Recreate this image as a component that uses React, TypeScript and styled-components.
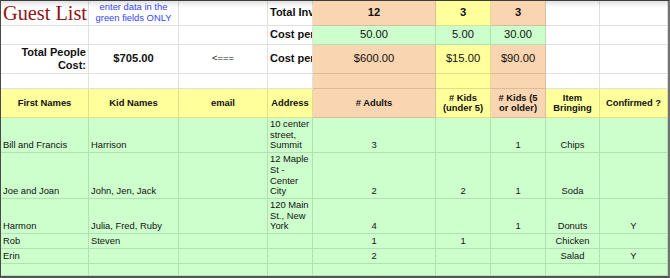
import React from 'react';
import styled, { createGlobalStyle } from 'styled-components';

const GlobalStyle = createGlobalStyle`
  html, body { margin: 0; padding: 0; background: #fff; }
  body { font-family: "Liberation Sans", Arial, sans-serif; }
`;

const GREEN = '#ccffcc';
const ORANGE = '#fad5b2';
const YELLOW = '#ffff9c';

const COLS = [88, 90, 89, 45, 123, 55, 55, 54, 68];
const ROWS = [25, 19, 29, 15, 29, 35, 46, 35, 15, 15, 12];

const Sheet = styled.div`
  box-sizing: border-box;
  width: 670px;
  height: 278px;
  display: grid;
  grid-template-columns: ${COLS.map((c) => `${c}px`).join(' ')};
  grid-template-rows: ${ROWS.map((r) => `${r}px`).join(' ')};
  border-top: 1px solid #3c3c3c;
  border-left: 1px solid #4a4a4a;
  border-right: 2px solid #727272;
  border-bottom: 2px solid #555;
  background: #fff;
  box-shadow: inset 0 7px 6px -5px rgba(0, 0, 0, 0.16);
  overflow: hidden;
  color: #111;
`;

type Align = 'left' | 'center' | 'right';
type VAlign = 'middle' | 'bottom';

const Cell = styled.div<{ $bg?: string; $align?: Align; $v?: VAlign }>`
  box-sizing: border-box;
  min-width: 0;
  display: flex;
  flex-direction: column;
  justify-content: ${(p) => (p.$v === 'middle' ? 'center' : 'flex-end')};
  text-align: ${(p) => p.$align ?? 'left'};
  padding: 0 2px 1px 2px;
  background: ${(p) => p.$bg ?? 'transparent'};
  border-right: 1px solid rgba(0, 0, 0, 0.12);
  border-bottom: 1px solid rgba(0, 0, 0, 0.12);
  font-size: 9.4px;
  line-height: 10.7px;
  overflow: hidden;
`;

const Title = styled.span`
  font-family: "Liberation Serif", "Times New Roman", serif;
  font-size: 20.3px;
  line-height: 22px;
  color: #8e1515;
  white-space: nowrap;
`;

const Note = styled.span`
  color: #3246ff;
  font-size: 9.4px;
  line-height: 10.7px;
`;

const Label = styled.span`
  font-weight: bold;
  font-size: 11px;
  line-height: 12.5px;
  white-space: nowrap;
`;

const Value = styled.span<{ $bold?: boolean }>`
  font-weight: ${(p) => (p.$bold ? 'bold' : 'normal')};
  font-size: 11.2px;
  line-height: 12.5px;
  white-space: nowrap;
`;

const Head = styled.span`
  font-weight: bold;
  font-size: 9.4px;
  line-height: 10px;
`;

type DataRow = {
  first: string;
  kids: string;
  email: string;
  address: string;
  adults: string;
  under5: string;
  over5: string;
  item: string;
  confirmed: string;
};

const guests: DataRow[] = [
  { first: 'Bill and Francis', kids: 'Harrison', email: '', address: '10 center street, Summit', adults: '3', under5: '', over5: '1', item: 'Chips', confirmed: '' },
  { first: 'Joe and Joan', kids: 'John, Jen, Jack', email: '', address: '12 Maple St - Center City', adults: '2', under5: '2', over5: '1', item: 'Soda', confirmed: '' },
  { first: 'Harmon', kids: 'Julia, Fred, Ruby', email: '', address: '120 Main St., New York', adults: '4', under5: '', over5: '1', item: 'Donuts', confirmed: 'Y' },
  { first: 'Rob', kids: 'Steven', email: '', address: '', adults: '1', under5: '1', over5: '', item: 'Chicken', confirmed: '' },
  { first: 'Erin', kids: '', email: '', address: '', adults: '2', under5: '', over5: '', item: 'Salad', confirmed: 'Y' },
  { first: '', kids: '', email: '', address: '', adults: '', under5: '', over5: '', item: '', confirmed: '' },
];

const headers: { text: React.ReactNode; bg: string }[] = [
  { text: 'First Names', bg: YELLOW },
  { text: 'Kid Names', bg: YELLOW },
  { text: 'email', bg: YELLOW },
  { text: 'Address', bg: YELLOW },
  { text: '# Adults', bg: ORANGE },
  { text: <>#&nbsp;Kids<br />(under 5)</>, bg: YELLOW },
  { text: <># Kids (5<br />or older)</>, bg: ORANGE },
  { text: <>Item<br />Bringing</>, bg: YELLOW },
  { text: 'Confirmed ?', bg: YELLOW },
];

export default function App() {
  return (
    <>
      <GlobalStyle />
      <Sheet>
        {/* Row 1 */}
        <Cell $v="middle"><Title>Guest List</Title></Cell>
        <Cell $v="middle" $align="center"><Note>enter data in the<br />green fields ONLY</Note></Cell>
        <Cell />
        <Cell $v="middle"><Label>Total Invited</Label></Cell>
        <Cell $v="middle" $align="center" $bg={ORANGE}><Value $bold>12</Value></Cell>
        <Cell $v="middle" $align="center" $bg={YELLOW}><Value $bold>3</Value></Cell>
        <Cell $v="middle" $align="center" $bg={ORANGE}><Value $bold>3</Value></Cell>
        <Cell />
        <Cell />

        {/* Row 2 */}
        <Cell />
        <Cell />
        <Cell />
        <Cell $v="middle"><Label>Cost per Person</Label></Cell>
        <Cell $v="middle" $align="center" $bg={GREEN}><Value>50.00</Value></Cell>
        <Cell $v="middle" $align="center" $bg={GREEN}><Value>5.00</Value></Cell>
        <Cell $v="middle" $align="center" $bg={GREEN}><Value>30.00</Value></Cell>
        <Cell />
        <Cell />

        {/* Row 3 */}
        <Cell $v="middle" $align="right"><Label>Total People<br />Cost:</Label></Cell>
        <Cell $v="middle" $align="center"><Value $bold>$705.00</Value></Cell>
        <Cell $v="middle" $align="center">&lt;===</Cell>
        <Cell $v="middle"><Label>Cost per Category</Label></Cell>
        <Cell $v="middle" $align="center" $bg={ORANGE}><Value>$600.00</Value></Cell>
        <Cell $v="middle" $align="center" $bg={YELLOW}><Value>$15.00</Value></Cell>
        <Cell $v="middle" $align="center" $bg={ORANGE}><Value>$90.00</Value></Cell>
        <Cell />
        <Cell />

        {/* Row 4 */}
        <Cell />
        <Cell />
        <Cell />
        <Cell />
        <Cell $bg={ORANGE} />
        <Cell $bg={YELLOW} />
        <Cell $bg={ORANGE} />
        <Cell />
        <Cell />

        {/* Header row */}
        {headers.map((h, i) => (
          <Cell key={`h${i}`} $v="middle" $align="center" $bg={h.bg}>
            <Head>{h.text}</Head>
          </Cell>
        ))}

        {/* Data rows */}
        {guests.map((g, i) => (
          <React.Fragment key={`g${i}`}>
            <Cell $bg={GREEN}>{g.first}</Cell>
            <Cell $bg={GREEN}>{g.kids}</Cell>
            <Cell $bg={GREEN}>{g.email}</Cell>
            <Cell $bg={GREEN}>{g.address}</Cell>
            <Cell $bg={GREEN} $align="center">{g.adults}</Cell>
            <Cell $bg={GREEN} $align="center">{g.under5}</Cell>
            <Cell $bg={GREEN} $align="center">{g.over5}</Cell>
            <Cell $bg={GREEN} $align="center">{g.item}</Cell>
            <Cell $bg={GREEN} $align="center">{g.confirmed}</Cell>
          </React.Fragment>
        ))}
      </Sheet>
    </>
  );
}
